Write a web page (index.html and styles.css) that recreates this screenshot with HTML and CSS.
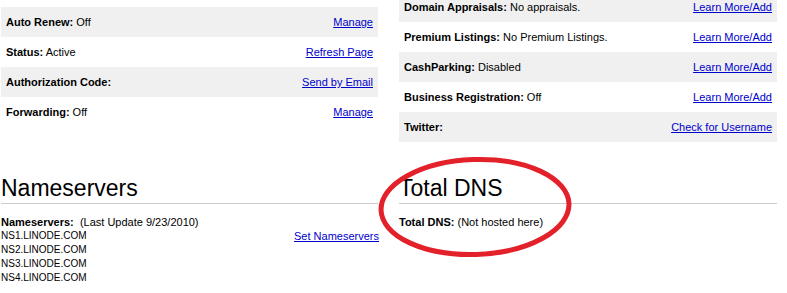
FILE: index.html
```html
<!DOCTYPE html>
<html lang="en">
<head>
  <meta charset="UTF-8">
  <title>Domain Details</title>
  <link rel="stylesheet" href="styles.css">
</head>
<body>
  <div class="page">
    <div class="cols">
      <div class="col col-left">
        <div class="row"><span><b>Auto Renew:</b> Off</span><a href="#">Manage</a></div>
        <div class="row"><span><b>Status:</b> Active</span><a href="#">Refresh Page</a></div>
        <div class="row"><span><b>Authorization Code:</b></span><a href="#">Send by Email</a></div>
        <div class="row"><span><b>Forwarding:</b> Off</span><a href="#">Manage</a></div>
      </div>
      <div class="col col-right">
        <div class="row"><span><b>Domain Appraisals:</b> No appraisals.</span><a href="#">Learn More/Add</a></div>
        <div class="row"><span><b>Premium Listings:</b> No Premium Listings.</span><a href="#">Learn More/Add</a></div>
        <div class="row"><span><b>CashParking:</b> Disabled</span><a href="#">Learn More/Add</a></div>
        <div class="row"><span><b>Business Registration:</b> Off</span><a href="#">Learn More/Add</a></div>
        <div class="row"><span><b>Twitter:</b></span><a href="#">Check for Username</a></div>
      </div>
    </div>

    <div class="cols">
      <div class="col col-left section">
        <h2>Nameservers</h2>
        <div class="info"><b>Nameservers:</b>&nbsp; (Last Update 9/23/2010)</div>
        <div class="ns">
          <div class="ns-list">
            <div>NS1.LINODE.COM</div>
            <div>NS2.LINODE.COM</div>
            <div>NS3.LINODE.COM</div>
            <div>NS4.LINODE.COM</div>
          </div>
          <a href="#">Set Nameservers</a>
        </div>
      </div>
      <div class="col col-right section">
        <h2>Total DNS</h2>
        <div class="info"><b>Total DNS:</b> (Not hosted here)</div>
        <svg class="circle" width="204" height="108" viewBox="0 0 204 108">
          <ellipse cx="100" cy="53" rx="94" ry="47.5" transform="rotate(-2 100 53)" fill="none" stroke="#e3212b" stroke-width="5"/>
        </svg>
      </div>
    </div>
  </div>
</body>
</html>
```

FILE: styles.css
```css
* { box-sizing: border-box; }
body { margin: 0; background: #fff; font-family: "Liberation Sans", Arial, sans-serif; font-size: 11px; color: #000; }
a { color: #0000cc; }
.page { margin-top: -8px; }
.cols { display: flex; align-items: flex-start; gap: 21px; padding-left: 1px; }
.col { flex: 0 0 auto; }
.col-left { width: 377px; padding-top: 15px; }
.col-right { width: 378px; }
.row { height: 30px; display: flex; justify-content: space-between; align-items: center; padding: 0 5px; }
.row:nth-child(odd) { background: #f0f0f0; }
.section { position: relative; padding-top: 0; }
.section h2 { margin: 33px 0 0; font-size: 23px; font-weight: normal; line-height: 26px; padding-bottom: 2px; border-bottom: 1px solid #cccccc; }
.info { margin-top: 11px; line-height: 14px; }
.ns { display: flex; justify-content: space-between; align-items: flex-start; line-height: 14px; margin-right: -1px; }
.ns-list { font-size: 10px; }
.circle { position: absolute; left: -24px; top: 12px; }
```
